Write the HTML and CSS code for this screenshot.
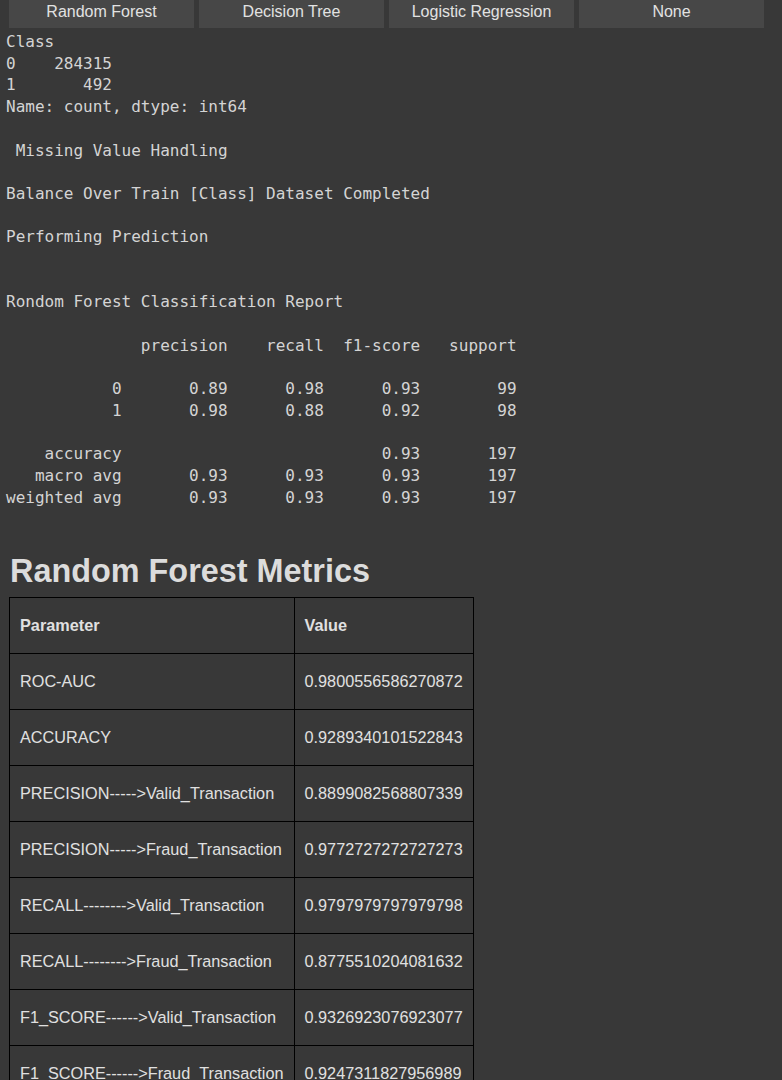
FILE: index.html
```html
<!DOCTYPE html>
<html>
<head>
<meta charset="utf-8">
<link rel="stylesheet" href="styles.css">
</head>
<body>
<div class="buttons">
  <button class="btn">Random Forest</button>
  <button class="btn">Decision Tree</button>
  <button class="btn">Logistic Regression</button>
  <button class="btn">None</button>
</div>
<pre class="out">Class
0    284315
1       492
Name: count, dtype: int64

 Missing Value Handling

Balance Over Train [Class] Dataset Completed

Performing Prediction


Rondom Forest Classification Report

              precision    recall  f1-score   support

           0       0.89      0.98      0.93        99
           1       0.98      0.88      0.92        98

    accuracy                           0.93       197
   macro avg       0.93      0.93      0.93       197
weighted avg       0.93      0.93      0.93       197</pre>
<h2 class="title">Random Forest Metrics</h2>
<table class="metrics">
  <tr><th>Parameter</th><th>Value</th></tr>
  <tr><td>ROC-AUC</td><td>0.9800556586270872</td></tr>
  <tr><td>ACCURACY</td><td>0.9289340101522843</td></tr>
  <tr><td>PRECISION-----&gt;Valid_Transaction</td><td>0.8899082568807339</td></tr>
  <tr><td>PRECISION-----&gt;Fraud_Transaction</td><td>0.9772727272727273</td></tr>
  <tr><td>RECALL--------&gt;Valid_Transaction</td><td>0.9797979797979798</td></tr>
  <tr><td>RECALL--------&gt;Fraud_Transaction</td><td>0.8775510204081632</td></tr>
  <tr><td>F1_SCORE------&gt;Valid_Transaction</td><td>0.9326923076923077</td></tr>
  <tr><td>F1_SCORE------&gt;Fraud_Transaction</td><td>0.9247311827956989</td></tr>
</table>
</body>
</html>
```
FILE: styles.css
```css
html, body {
  margin: 0;
  padding: 0;
  background: #383838;
}
body {
  color: #d6d6d6;
  font-family: "Liberation Sans", Arial, sans-serif;
}
.buttons {
  display: grid;
  grid-template-columns: repeat(4, 185px);
  column-gap: 5px;
  margin-left: 9px;
}
.btn {
  height: 28px;
  background: #474747;
  border: none;
  margin: 0;
  padding: 0 0 5px 0;
  color: #e2e2e2;
  font-family: "Liberation Sans", Arial, sans-serif;
  font-size: 16px;
  text-align: center;
}
.out {
  margin: 3px 0 0 6px;
  font-family: "DejaVu Sans Mono", monospace;
  font-size: 16px;
  line-height: 21.7px;
  color: #d4d4d4;
}
.title {
  margin: 45px 0 7px 10px;
  font-size: 32.4px;
  font-weight: bold;
  color: #dcdcdc;
  line-height: 37px;
}
.metrics {
  margin-left: 9px;
  border-collapse: collapse;
  font-size: 16.25px;
  color: #e0e0e0;
}
.metrics th, .metrics td {
  border: 1.5px solid #000;
  padding: 18px 10px;
  line-height: 19px;
  text-align: left;
}
.metrics th {
  font-weight: bold;
}
```
